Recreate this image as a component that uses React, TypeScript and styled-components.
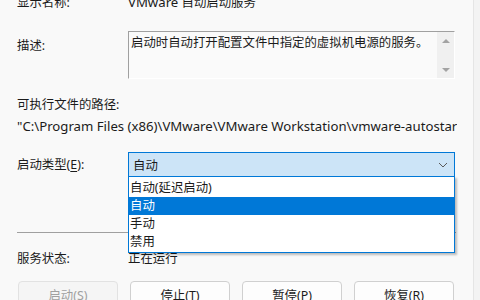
import React from 'react'
import styled, { createGlobalStyle } from 'styled-components'

const GlobalStyle = createGlobalStyle`
  html, body {
    margin: 0;
    padding: 0;
    background: #f3f3f3;
    overflow: hidden;
  }
  body {
    font-family: "Noto Sans", "Noto Sans CJK SC", sans-serif;
    font-size: 12.4px;
    color: #1b1b1b;
  }
`

const Page = styled.div`
  position: relative;
  width: 474px;
  height: 300px;
  background: #f9f9f9;
  border-right: 1px solid #e5e5e5;
  overflow: hidden;
  box-sizing: border-box;
  padding: 0 18px 0 17px;
`

const Row = styled.div<{ $top: number; $align?: string }>`
  display: grid;
  grid-template-columns: 111px 1fr;
  align-items: ${(p) => p.$align || 'center'};
  margin-top: ${(p) => p.$top}px;
`

const Label = styled.div<{ $offset?: number }>`
  height: 16px;
  line-height: 16px;
  white-space: nowrap;
  padding-top: ${(p) => p.$offset || 0}px;
`

const Value = styled.div`
  height: 16px;
  line-height: 16px;
  white-space: nowrap;
`

// latin runs render a bit larger than the CJK glyphs in the original UI font
const Latin = styled.span`
  font-size: 13.2px;
  line-height: 1;
`

const Underline = styled.span`
  text-decoration: underline;
  text-underline-offset: 2px;
`

const DescBox = styled.div`
  display: flex;
  height: 48px;
  box-sizing: border-box;
  border-top: 1px solid #a0a0a0;
  border-left: 1px solid #a0a0a0;
  border-right: 1px solid #ffffff;
  border-bottom: 1px solid #ffffff;
  background: #fafafa;
`

const DescText = styled.div`
  flex: 1;
  padding: 3px 0 0 2px;
  line-height: 16px;
  white-space: nowrap;
  overflow: hidden;
`

const ScrollBar = styled.div`
  width: 17px;
  background: #f0f0f0;
  display: flex;
  flex-direction: column;
  justify-content: space-between;
  align-items: center;
  padding: 7px 0 6px;
  box-sizing: border-box;
`

const Arrow = styled.div<{ $down?: boolean }>`
  width: 0;
  height: 0;
  border-left: 4px solid transparent;
  border-right: 4px solid transparent;
  ${(p) =>
    p.$down
      ? 'border-top: 4px solid #a3a3a3;'
      : 'border-bottom: 4px solid #a3a3a3;'}
`

const PathLabel = styled.div`
  margin-top: 18px;
  height: 16px;
  line-height: 16px;
`

const PathField = styled.div`
  margin-top: 6px;
  height: 16px;
  line-height: 16px;
  white-space: nowrap;
  overflow: hidden;
  width: 440px;
`

const ComboWrap = styled.div`
  position: relative;
`

const Combo = styled.div`
  height: 25px;
  box-sizing: border-box;
  border: 1px solid #0078d7;
  background: #cce4f7;
  display: flex;
  align-items: center;
  justify-content: space-between;
  padding: 0 6px 0 4px;
`

const ListBox = styled.div`
  position: absolute;
  left: 0;
  right: 0;
  top: 24px;
  background: #ffffff;
  border: 1px solid #0078d7;
  padding: 2px 0 1px;
  box-shadow: 2px 2px 2px rgba(0, 0, 0, 0.25);
  z-index: 2;
`

const Item = styled.div<{ $selected?: boolean }>`
  height: 18px;
  line-height: 18px;
  padding-left: 1px;
  background: ${(p) => (p.$selected ? '#0078d7' : 'transparent')};
  color: ${(p) => (p.$selected ? '#ffffff' : '#1b1b1b')};
`

const Separator = styled.div`
  margin-top: 55px;
  height: 1px;
  background: #a0a0a0;
  width: 439px;
`

const Buttons = styled.div`
  display: flex;
  gap: 12px;
  margin-top: 14px;
  padding-left: 1px;
`

const Button = styled.div<{ $disabled?: boolean }>`
  width: 100px;
  height: 29px;
  flex-shrink: 0;
  box-sizing: border-box;
  border: 1px solid ${(p) => (p.$disabled ? '#e2e2e2' : '#d0d0d0')};
  border-radius: 4px;
  background: ${(p) => (p.$disabled ? '#f5f5f5' : '#fdfdfd')};
  color: ${(p) => (p.$disabled ? '#a0a0a0' : '#1b1b1b')};
  display: flex;
  align-items: center;
  justify-content: center;
  line-height: 16px;
`

const Chevron = () => (
  <svg width="10" height="6" viewBox="0 0 10 6">
    <path d="M1 1 L5 5 L9 1" fill="none" stroke="#5a5a5a" strokeWidth="1" />
  </svg>
)

export default function App() {
  return (
    <>
      <GlobalStyle />
      <Page>
        <Row $top={-5}>
          <Label>显示名称:</Label>
          <Value>
            <Latin>VMware</Latin> 自动启动服务
          </Value>
        </Row>
        <Row $top={20} $align="start">
          <Label $offset={7}>描述:</Label>
          <DescBox>
            <DescText>启动时自动打开配置文件中指定的虚拟机电源的服务。</DescText>
            <ScrollBar>
              <Arrow />
              <Arrow $down />
            </ScrollBar>
          </DescBox>
        </Row>
        <PathLabel>可执行文件的路径:</PathLabel>
        <PathField>
          <Latin>"C:\Program Files (x86)\VMware\VMware Workstation\vmware-autostart.exe"</Latin>
        </PathField>
        <Row $top={17}>
          <Label>
            启动类型(<Underline>E</Underline>):
          </Label>
          <ComboWrap>
            <Combo>
              <span>自动</span>
              <Chevron />
            </Combo>
            <ListBox>
              <Item>自动(延迟启动)</Item>
              <Item $selected>自动</Item>
              <Item>手动</Item>
              <Item>禁用</Item>
            </ListBox>
          </ComboWrap>
        </Row>
        <Separator />
        <Row $top={18}>
          <Label>服务状态:</Label>
          <Value>正在运行</Value>
        </Row>
        <Buttons>
          <Button $disabled>启动(S)</Button>
          <Button>停止(T)</Button>
          <Button>暂停(P)</Button>
          <Button>恢复(R)</Button>
        </Buttons>
      </Page>
    </>
  )
}
